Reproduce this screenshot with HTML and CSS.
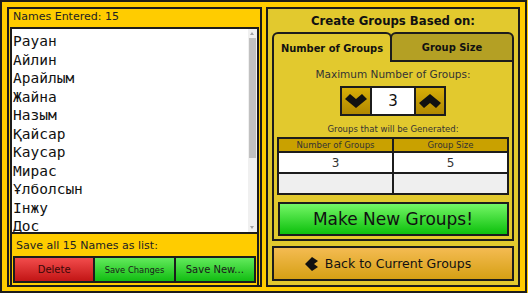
FILE: index.html
```html
<!DOCTYPE html>
<html lang="en">
<head>
  <meta charset="UTF-8" />
  <meta name="viewport" content="width=device-width, initial-scale=1.0" />
  <title>Group Maker</title>
  <link rel="stylesheet" href="styles.css">
</head>
<body>
  <div class="app">

    <div class="names-panel">
      <div class="names-count">Names Entered: 15</div>
      <div class="names-box">
        <div class="names-list">
          <div>Рауан</div>
          <div>Айлин</div>
          <div>Арайлым</div>
          <div>Жайна</div>
          <div>Назым</div>
          <div>Қайсар</div>
          <div>Каусар</div>
          <div>Мирас</div>
          <div>Ұлболсын</div>
          <div>Інжу</div>
          <div>Дос</div>
        </div>
        <div class="scrollbar">
          <div class="scroll-arrow up"></div>
          <div class="scroll-track"><div class="scroll-thumb"></div></div>
          <div class="scroll-arrow down"></div>
        </div>
      </div>
      <div class="save-box">
        <div class="save-label">Save all 15 Names as list:</div>
        <div class="save-buttons">
          <button class="btn-delete">Delete</button>
          <button class="btn-save small">Save Changes</button>
          <button class="btn-save">Save New...</button>
        </div>
      </div>
    </div>

    <div class="groups-panel">
      <h2>Create Groups Based on:</h2>
      <div class="tabs">
        <div class="tab active">Number of Groups</div>
        <div class="tab">Group Size</div>
      </div>
      <div class="tab-body">
        <div class="max-label">Maximum Number of Groups:</div>
        <div class="spinner">
          <button class="spin-btn">
            <svg width="22" height="14" viewBox="0 0 22 14"><polygon points="0,5 5,0 11,5 17,0 22,5 11,14" /></svg>
          </button>
          <div class="spin-value">3</div>
          <button class="spin-btn">
            <svg width="22" height="14" viewBox="0 0 22 14"><polygon points="0,9 11,0 22,9 17,14 11,9 5,14" /></svg>
          </button>
        </div>
        <div class="preview-label">Groups that will be Generated:</div>
        <table class="preview">
          <tr><th>Number of Groups</th><th>Group Size</th></tr>
          <tr><td>3</td><td>5</td></tr>
          <tr class="empty"><td></td><td></td></tr>
        </table>
        <button class="make-btn">Make New Groups!</button>
      </div>
      <button class="back-btn">
        <svg width="14" height="16" viewBox="0 0 14 16"><polygon points="0,8 7,1 13,5 9,8 13,11 7,15" /></svg>
        <span>Back to Current Groups</span>
      </button>
    </div>

  </div>
</body>
</html>
```

FILE: styles.css
```css
body {
  margin: 0;
  background: #ffcc00;
  font-family: "DejaVu Sans", sans-serif;
  color: #222;
}
button {
  font-family: inherit;
  margin: 0;
  padding: 0;
  cursor: pointer;
}
.app {
  box-sizing: border-box;
  width: 527px;
  height: 293px;
  border: 2px solid #1c1c1c;
  padding: 5px 5px 4px;
  display: flex;
  gap: 4px;
  background: #ffcc00;
}

/* left side: names */
.names-panel {
  box-sizing: border-box;
  width: 255px;
  border: 2px solid #1c1c1c;
  padding: 1px 1px 0;
  display: flex;
  flex-direction: column;
}
.names-count {
  height: 17px;
  line-height: 13px;
  padding-left: 3px;
  font-size: 11px;
}
.names-box {
  box-sizing: border-box;
  height: 207px;
  border: 2px solid #1c1c1c;
  background: #fff;
  display: flex;
}
.names-list {
  flex: 1;
  overflow: hidden;
  padding: 3px 1px 0;
  font-family: "DejaVu Sans Mono", monospace;
  font-size: 14.5px;
  line-height: 18.5px;
  color: #111;
}
.scrollbar {
  width: 9px;
  background: #f0f0f0;
  display: flex;
  flex-direction: column;
}
.scroll-arrow {
  height: 9px;
  position: relative;
}
.scroll-arrow::after {
  content: "";
  position: absolute;
  left: 2px;
  top: 3px;
  border-left: 2.5px solid transparent;
  border-right: 2.5px solid transparent;
}
.scroll-arrow.up::after {
  border-bottom: 3px solid #a3a3a3;
}
.scroll-arrow.down::after {
  border-top: 3px solid #a3a3a3;
}
.scroll-track {
  flex: 1;
}
.scroll-thumb {
  height: 120px;
  margin: 0 1px;
  background: #c1c1c1;
}
.save-box {
  flex: 1;
  border-left: 2px solid #1c1c1c;
  border-right: 2px solid #1c1c1c;
  padding: 0 1px 2px;
}
.save-label {
  height: 22px;
  line-height: 24px;
  padding-left: 3px;
  font-size: 11px;
}
.save-buttons {
  box-sizing: border-box;
  height: 27px;
  border: 2px solid #1c1c1c;
  display: flex;
}
.save-buttons button {
  flex: 1;
  border: 0;
  border-left: 2px solid #1c1c1c;
  font-size: 10px;
  color: #1a1a1a;
}
.save-buttons button:first-child {
  border-left: 0;
}
.btn-delete {
  background: linear-gradient(#f24c4c, #c21515);
  color: #3a0808 !important;
}
.btn-save {
  background: linear-gradient(#62ea5c, #12bd12);
}
.btn-save.small {
  font-size: 8.4px !important;
}

/* right side: groups */
.groups-panel {
  flex: 1;
  box-sizing: border-box;
  border: 2px solid #1c1c1c;
  background: #e2c92e;
  padding: 0 4px;
  display: flex;
  flex-direction: column;
}
h2 {
  margin: 0;
  height: 23px;
  line-height: 24px;
  text-align: center;
  font-family: "DejaVu Sans Condensed", "Liberation Sans", sans-serif;
  font-size: 13px;
  font-weight: bold;
  color: #111;
}
.tabs {
  display: flex;
  height: 30px;
}
.tab {
  box-sizing: border-box;
  border: 2px solid #1c1c1c;
  border-radius: 6px 6px 0 0;
  display: flex;
  align-items: center;
  justify-content: center;
  font-family: "DejaVu Sans Condensed", "Liberation Sans", sans-serif;
  font-size: 11px;
  font-weight: bold;
  color: #111;
  background: #b4a024;
  flex: 1;
  margin-left: -2px;
  padding-top: 1px;
}
.tab.active {
  flex: none;
  width: 120px;
  margin-left: 0;
  border-bottom: none;
  background: #e2c92e;
}
.tab-body {
  box-sizing: border-box;
  height: 179px;
  border: 2px solid #1c1c1c;
  border-top: none;
  padding: 5px 1px 0;
  display: flex;
  flex-direction: column;
  align-items: center;
}
.max-label {
  height: 14px;
  line-height: 14px;
  font-size: 10.5px;
  color: #333;
}
.spinner {
  margin-top: 5px;
  display: flex;
  height: 30px;
  box-sizing: border-box;
  border: 2px solid #1c1c1c;
}
.spin-btn {
  width: 28px;
  border: 0;
  background: linear-gradient(#d8ae08, #b08800);
  display: flex;
  align-items: center;
  justify-content: center;
}
.spin-btn svg {
  fill: #111;
}
.spin-value {
  width: 42px;
  border-left: 2px solid #1c1c1c;
  border-right: 2px solid #1c1c1c;
  background: #fff;
  text-align: center;
  line-height: 26px;
  font-size: 15px;
  color: #111;
}
.preview-label {
  margin-top: 7px;
  height: 12px;
  line-height: 12px;
  font-size: 8.5px;
  color: #333;
}
.preview {
  margin-top: 2px;
  width: 232px;
  border-collapse: collapse;
  border: 2px solid #1c1c1c;
  table-layout: fixed;
}
.preview th, .preview td {
  border: 2px solid #1c1c1c;
  padding: 0;
  text-align: center;
  color: #333;
  font-weight: normal;
}
.preview th {
  height: 12px;
  line-height: 12px;
  font-size: 8.5px;
  background: #c9a100;
}
.preview td {
  height: 19px;
  font-size: 12px;
  background: #fff;
}
.preview .empty td {
  background: #efefef;
}
.make-btn {
  margin-top: 7px;
  width: 231px;
  height: 34px;
  border: 2px solid #1c1c1c;
  background: linear-gradient(#74f666, #0cc00c);
  font-size: 17px;
  color: #111;
}
.back-btn {
  margin-top: 5px;
  height: 35px;
  border: 2px solid #1c1c1c;
  background: linear-gradient(#f4bb52, #d6a014);
  display: flex;
  align-items: center;
  justify-content: center;
  gap: 6px;
  padding-right: 10px;
  font-size: 12.5px;
  color: #111;
}
.back-btn svg {
  fill: #111;
}
```
